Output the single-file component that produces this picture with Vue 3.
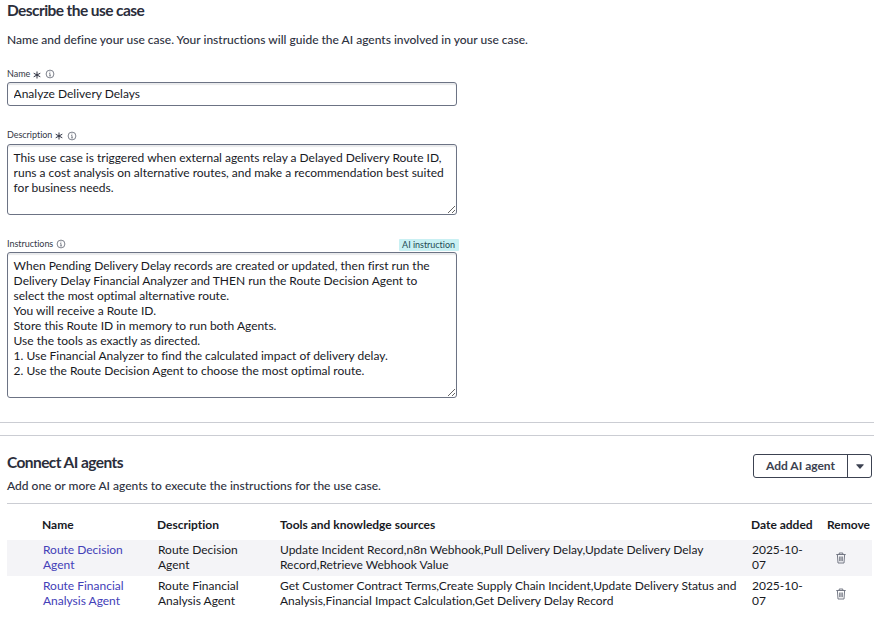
<script setup>
import { ref } from 'vue'

const name = ref('Analyze Delivery Delays')
const description = ref(
  'This use case is triggered when external agents relay a Delayed Delivery Route ID,\nruns a cost analysis on alternative routes, and make a recommendation best suited\nfor business needs.'
)
const instructions = ref(
  [
    'When Pending Delivery Delay records are created or updated, then first run the',
    'Delivery Delay Financial Analyzer and THEN run the Route Decision Agent to',
    'select the most optimal alternative route.',
    'You will receive a Route ID.',
    'Store this Route ID in memory to run both Agents.',
    'Use the tools as exactly as directed.',
    '1. Use Financial Analyzer to find the calculated impact of delivery delay.',
    '2. Use the Route Decision Agent to choose the most optimal route.'
  ].join('\n')
)
const agents = [
  {
    name: ['Route Decision', 'Agent'],
    tools: ['Update Incident Record,n8n Webhook,Pull Delivery Delay,Update Delivery Delay', 'Record,Retrieve Webhook Value'],
    date: ['2025-10-', '07']
  },
  {
    name: ['Route Financial', 'Analysis Agent'],
    tools: ['Get Customer Contract Terms,Create Supply Chain Incident,Update Delivery Status and', 'Analysis,Financial Impact Calculation,Get Delivery Delay Record'],
    date: ['2025-10-', '07']
  }
]
</script>

<template>
  <main class="page">
    <section class="define">
      <h2 class="title">Describe the use case</h2>
      <p class="lead">Name and define your use case. Your instructions will guide the AI agents involved in your use case.</p>

      <div class="field field-name">
        <div class="label">
          <span class="label-name">Name</span>
          <svg class="star" viewBox="0 0 8 8"><path d="M4 .5v7M.7 2.2l6.6 3.6M7.3 2.2L.7 5.8" /></svg>
          <svg class="info" viewBox="0 0 10 10"><circle cx="5" cy="5" r="3.9" /><path d="M4.3 4.5H5v2.4M4.2 6.9h1.7M4.9 2.6v.9" /></svg>
        </div>
        <input v-model="name" class="control input" spellcheck="false" />
      </div>

      <div class="field field-description">
        <div class="label">
          <span class="label-description">Description</span>
          <svg class="star low" viewBox="0 0 8 8"><path d="M4 .5v7M.7 2.2l6.6 3.6M7.3 2.2L.7 5.8" /></svg>
          <svg class="info low" viewBox="0 0 10 10"><circle cx="5" cy="5" r="3.9" /><path d="M4.3 4.5H5v2.4M4.2 6.9h1.7M4.9 2.6v.9" /></svg>
        </div>
        <textarea v-model="description" class="control area-description" spellcheck="false"></textarea>
      </div>

      <div class="field field-instructions">
        <div class="label">
          <span class="label-instructions">Instructions</span>
          <svg class="info" viewBox="0 0 10 10"><circle cx="5" cy="5" r="3.9" /><path d="M4.3 4.5H5v2.4M4.2 6.9h1.7M4.9 2.6v.9" /></svg>
          <span class="tag">AI instruction</span>
        </div>
        <textarea v-model="instructions" class="control area-instructions" spellcheck="false"></textarea>
      </div>
    </section>

    <div class="divider"></div>

    <section class="connect">
      <header class="connect-head">
        <div>
          <h2 class="title title-connect">Connect AI agents</h2>
          <p class="lead lead-connect">Add one or more AI agents to execute the instructions for the use case.</p>
        </div>
        <div class="split">
          <button class="split-main">Add AI agent</button>
          <button class="split-more" aria-label="More options">
            <svg class="caret" viewBox="0 0 8 5"><path d="M.6.3h6.8q.6 0 .2.6L4.5 4.5q-.5.5-1 0L.4.9Q0 .3.6.3z" /></svg>
          </button>
        </div>
      </header>

      <div class="grid">
        <div class="row head">
          <span></span>
          <span class="h-name">Name</span>
          <span>Description</span>
          <span class="h-tools">Tools and knowledge sources</span>
          <span class="h-date">Date added</span>
          <span class="h-remove">Remove</span>
        </div>
        <div v-for="(agent, i) in agents" :key="i" class="row item">
          <span></span>
          <a class="agent">{{ agent.name.join('\n') }}</a>
          <span class="desc">{{ agent.name.join('\n') }}</span>
          <span class="tools">{{ agent.tools.join('\n') }}</span>
          <span class="date">{{ agent.date.join('\n') }}</span>
          <span class="remove">
            <svg class="trash" viewBox="0 0 10 12">
              <path d="M.3 2.5h9.4M3.2 2.3V1h3.6v1.3M1.4 2.8l.6 8.2h6l.6-8.2M3.7 4.5v4.7M5 4.5v4.7M6.3 4.5v4.7" />
            </svg>
          </span>
        </div>
      </div>
    </section>
  </main>
</template>

<style>
body {
  background: #fff;
  overflow: hidden;
}
</style>

<style scoped>
.page {
  width: 874px;
  height: 622px;
  overflow: hidden;
  font-family: Lato, "Liberation Sans", sans-serif;
  font-size: 12px;
  line-height: 15px;
  font-variant-ligatures: none;
  color: #181a1f;
}
.define {
  height: 422px;
  padding: 0 7px;
  box-sizing: border-box;
}
.title {
  margin: 0;
  font-size: 15.5px;
  line-height: 20px;
  font-weight: 700;
  letter-spacing: -0.58px;
  color: #2b2e3b;
}
.lead {
  margin: 12px 0 0;
  font-weight: 500;
  color: #2d3140;
}
.field {
  width: 450px;
}
.field-name {
  margin-top: 20px;
}
.field-description {
  margin-top: 22px;
}
.field-instructions {
  margin-top: 22px;
}
.label {
  display: flex;
  align-items: center;
  height: 14px;
  font-size: 9px;
  line-height: 12px;
  letter-spacing: -0.03px;
  color: #343845;
}
.star {
  width: 8px;
  height: 8px;
  margin: 1px 0 0 3px;
  fill: none;
  stroke: #2d3140;
  stroke-width: 1;
}
.info {
  width: 10px;
  height: 10px;
  margin-left: 4px;
  fill: none;
  stroke: #5d6270;
  stroke-width: 0.8;
}
.label-instructions + .info {
  margin-left: 3px;
}
.low {
  margin-top: 2px;
}
.tag {
  margin: 2px -2px 0 auto;
  padding: 0 4px 0 3px;
  border-radius: 1px;
  background: #c9f0f3;
  color: #234b54;
}
.control {
  display: block;
  box-sizing: border-box;
  width: 450px;
  margin: 0;
  padding: 5px 6px 5px 5.6px;
  border: 1px solid #6c7384;
  border-radius: 3px;
  box-shadow: inset 0 2px 1px #e9eaec;
  outline: none;
  background: #fff;
  font: inherit;
  font-variant-ligatures: none;
  letter-spacing: -0.01px;
  color: #181a1f;
  white-space: pre;
  overflow: hidden;
}
.input {
  height: 24px;
  margin-top: 1px;
  padding-top: 2px;
  padding-bottom: 4px;
}
.area-description {
  height: 71px;
  margin-top: 2px;
}
.area-instructions {
  height: 146px;
  margin-top: 1px;
}
.divider {
  height: 12px;
  border-top: 1px solid #cbcdd3;
  border-bottom: 1px solid #cbcdd3;
}
.connect {
  padding: 16px 2px 0 7px;
}
.connect-head {
  display: flex;
  justify-content: space-between;
  height: 51px;
  border-bottom: 1px solid #cbcdd3;
}
.lead-connect {
  margin-top: 6px;
}
.split {
  display: flex;
  box-sizing: border-box;
  width: 119px;
  height: 24px;
  margin-top: 2px;
  border: 1px solid #3c4251;
  border-radius: 3px;
}
.split button {
  padding: 0;
  border: 0;
  background: none;
  font: inherit;
  color: #3c4251;
}
.split .split-main {
  flex: 1;
  padding-bottom: 2px;
  font-weight: 700;
}
.split .split-more {
  display: flex;
  align-items: center;
  justify-content: center;
  width: 24px;
  border-left: 1px solid #3c4251;
}
.caret {
  width: 8px;
  height: 5px;
  fill: #3c4251;
}
.row {
  display: grid;
  grid-template-columns: 35px 115px 123px 471px 76px 45px;
  white-space: pre;
}
.head {
  height: 36px;
  padding-top: 13px;
  box-sizing: border-box;
  font-weight: 700;
}
.item {
  height: 36px;
  padding-top: 2px;
  box-sizing: border-box;
  letter-spacing: -0.01px;
}
.item:nth-child(even) {
  background: #f4f4f7;
}
.agent {
  padding-left: 1px;
  color: #4340b8;
}
.desc,
.date {
  padding-left: 1px;
}
.remove {
  padding: 10px 0 0 9px;
}
.trash {
  display: block;
  width: 10px;
  height: 12px;
  fill: none;
  stroke: #666b78;
  stroke-width: 0.9;
}
</style>
